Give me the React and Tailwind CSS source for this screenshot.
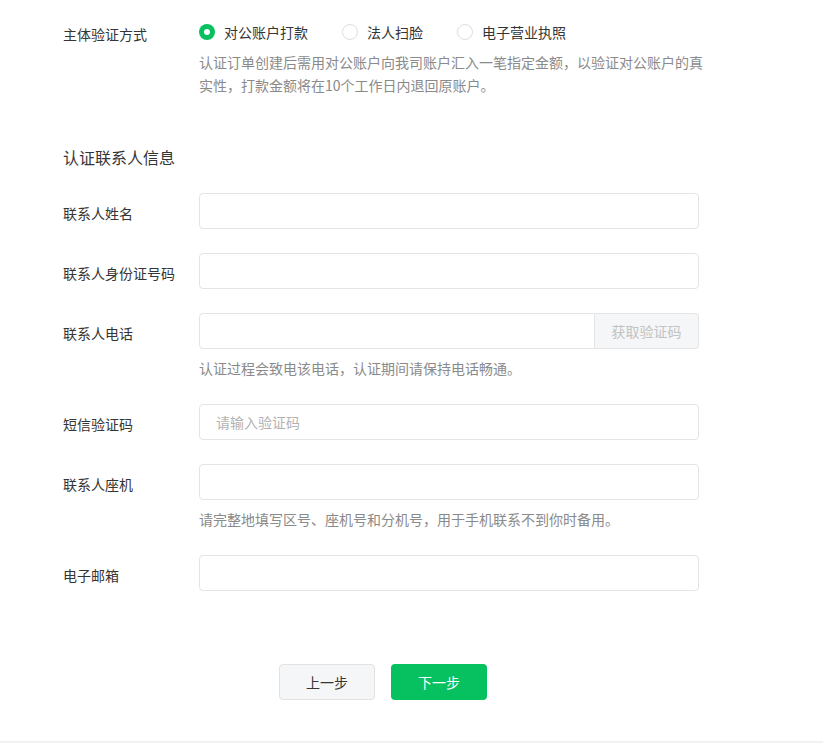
import React, { useState } from "react";

const font = { fontFamily: '"Noto Sans CJK SC", "Noto Sans", sans-serif' };

function Radio({ checked, label, onClick }) {
  return (
    <button type="button" onClick={onClick} className="flex items-center gap-[9px] mr-[34px]">
      {checked ? (
        <span className="w-4 h-4 rounded-full bg-[#07c160] flex items-center justify-center">
          <span className="w-[6px] h-[6px] rounded-full bg-white" />
        </span>
      ) : (
        <span className="w-4 h-4 rounded-full border border-[#dedede] bg-white" />
      )}
      <span className="text-sm text-[#353535] leading-6">{label}</span>
    </button>
  );
}

function Row({ label, help, children, last }) {
  return (
    <div className={"flex " + (last ? "" : help ? "mb-[26px]" : "mb-6")}>
      <div className="w-[136px] shrink-0 h-9 text-sm text-[#353535] leading-[40px]">{label}</div>
      <div className="w-[500px]">
        {children}
        {help && <p className="mt-[9px] text-sm leading-5 text-[#8a8a8a]">{help}</p>}
      </div>
    </div>
  );
}

function Field({ placeholder }) {
  return (
    <input
      placeholder={placeholder}
      className="w-full h-9 border border-[#e4e4e4] rounded-[4px] px-4 text-sm text-[#353535] outline-none placeholder:text-[#b2b2b2] focus:border-[#07c160]"
    />
  );
}

export default function App() {
  const [method, setMethod] = useState(0);
  const methods = ["对公账户打款", "法人扫脸", "电子营业执照"];

  return (
    <div className="min-h-[743px] bg-white flex flex-col" style={font}>
      <div className="pl-[63px] pt-5">
        <div className="flex">
          <div className="w-[136px] shrink-0 text-sm text-[#353535] leading-6 pt-[2px]">主体验证方式</div>
          <div>
            <div className="flex items-center">
              {methods.map((m, i) => (
                <Radio key={m} label={m} checked={method === i} onClick={() => setMethod(i)} />
              ))}
            </div>
            <p className="mt-[7px] w-[508px] text-sm leading-[23px] text-[#8a8a8a]">
              认证订单创建后需用对公账户向我司账户汇入一笔指定金额，以验证对公账户的真实性，打款金额将在10个工作日内退回原账户。
            </p>
          </div>
        </div>

        <h3 className="mt-[48px] text-base leading-6 text-[#353535]">认证联系人信息</h3>

        <div className="mt-6">
          <Row label="联系人姓名">
            <Field />
          </Row>
          <Row label="联系人身份证号码">
            <Field />
          </Row>
          <Row label="联系人电话" help="认证过程会致电该电话，认证期间请保持电话畅通。">
            <div className="flex">
              <input className="flex-1 min-w-0 h-9 border border-[#e4e4e4] rounded-l-[4px] px-4 text-sm outline-none" />
              <button
                type="button"
                className="w-[104px] h-9 border border-l-0 border-[#e4e4e4] rounded-r-[4px] bg-[#f5f6f7] text-sm text-[#c2c2c2]"
              >
                获取验证码
              </button>
            </div>
          </Row>
          <Row label="短信验证码">
            <Field placeholder="请输入验证码" />
          </Row>
          <Row label="联系人座机" help="请完整地填写区号、座机号和分机号，用于手机联系不到你时备用。">
            <Field />
          </Row>
          <Row label="电子邮箱" last>
            <Field />
          </Row>
        </div>

        <div className="mt-[73px] flex gap-4 pl-[216px]">
          <button type="button" className="w-24 h-9 rounded-[4px] border border-[#e2e2e2] bg-[#f5f6f7] text-sm text-[#353535]">
            上一步
          </button>
          <button type="button" className="w-24 h-9 rounded-[4px] bg-[#07c160] text-sm text-white">
            下一步
          </button>
        </div>
      </div>
      <div className="mt-[41px] h-[3px] bg-[#f2f2f2]" />
    </div>
  );
}
